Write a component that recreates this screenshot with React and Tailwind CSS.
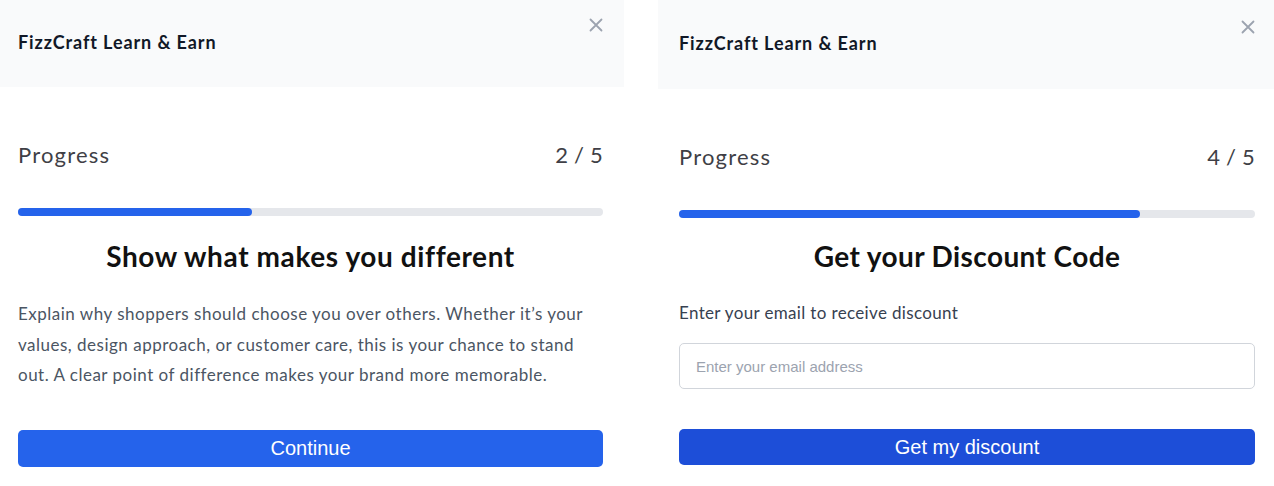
import React from "react";

const font = { fontFamily: "Lato, 'Noto Sans', sans-serif" };
const arial = { fontFamily: "'Liberation Sans', Arial, sans-serif" };

function CloseIcon() {
  return (
    <svg width="14" height="14" viewBox="0 0 14 14" fill="none" stroke="#9ca3af" strokeWidth="1.8" strokeLinecap="round">
      <path d="M1.5 1.5 L12.5 12.5 M12.5 1.5 L1.5 12.5" />
    </svg>
  );
}

function Header({ h, iconPos }) {
  return (
    <div className={`relative flex items-center bg-[#f9fafb] px-[21px] pb-[2px] ${h}`}>
      <div className="text-[18px] font-bold tracking-[0.9px] text-[#111827]">FizzCraft Learn &amp; Earn</div>
      <div className={`absolute ${iconPos}`}>
        <CloseIcon />
      </div>
    </div>
  );
}

function Progress({ step, pct }) {
  return (
    <div>
      <div className="flex items-center justify-between text-[22px] leading-[30px] text-[#3f3f46]">
        <span className="tracking-[1.2px]">Progress</span>
        <span className="tracking-[0.2px]">{step}</span>
      </div>
      <div className="mt-[38px] h-[8px] w-full rounded-full bg-[#e5e7eb]">
        <div className="h-full rounded-full bg-[#2563eb]" style={{ width: pct }} />
      </div>
    </div>
  );
}

export default function App() {
  return (
    <div className="flex h-[486px] w-[1274px] gap-[34px] overflow-hidden bg-white" style={font}>
      <div className="ml-[-3px] w-[627px] shrink-0">
        <Header h="h-[87px]" iconPos="right-[21px] top-[18px]" />
        <div className="px-[21px] pt-[53px]">
          <Progress step="2 / 5" pct="40%" />
          <h2 className="mt-[22px] text-center text-[28px] font-bold leading-[36px] tracking-[0.6px] text-[#111111]">
            Show what makes you different
          </h2>
          <p className="mt-[25px] text-[17px] leading-[30.5px] tracking-[0.5px] text-[#4b5563]">
            Explain why shoppers should choose you over others. Whether it’s your values, design approach, or customer care, this is your chance to stand out. A clear point of difference makes your brand more memorable.
          </p>
          <button className="mt-[39px] block h-[37px] w-full rounded-[5px] bg-[#2563eb] text-[20px] text-white" style={arial}>
            Continue
          </button>
        </div>
      </div>
      <div className="w-[616px] shrink-0">
        <Header h="h-[89px]" iconPos="right-[19px] top-[20px]" />
        <div className="pl-[21px] pr-[19px] pt-[53px]">
          <Progress step="4 / 5" pct="80%" />
          <h2 className="mt-[20px] text-center text-[28px] font-bold leading-[36px] tracking-[0.4px] text-[#111111]">
            Get your Discount Code
          </h2>
          <p className="mt-[27px] text-[17px] leading-[24px] tracking-[0.35px] text-[#374151]">
            Enter your email to receive discount
          </p>
          <input
            placeholder="Enter your email address"
            className="mt-[18px] block h-[46px] w-full rounded-[5px] border border-[#d1d5db] px-[16px] text-[15px] text-[#111827] outline-none placeholder:text-[#9ca3af]"
            style={arial}
          />
          <button className="mt-[40px] block h-[36px] w-full rounded-[5px] bg-[#1d4ed8] text-[20px] text-white" style={arial}>
            Get my discount
          </button>
        </div>
      </div>
    </div>
  );
}
